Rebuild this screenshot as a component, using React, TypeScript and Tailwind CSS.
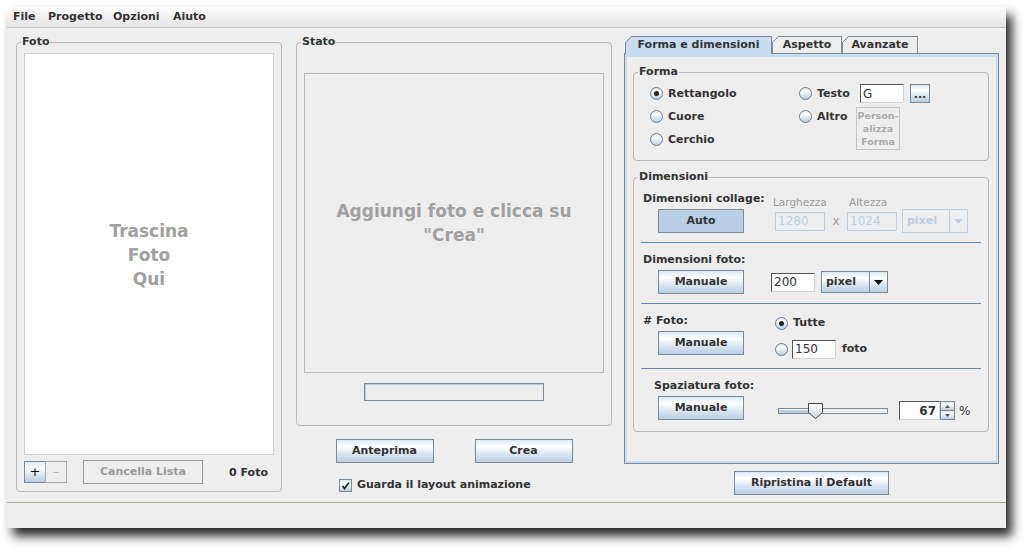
import React from 'react';

// Ocean (Metal) look: gradient used by buttons, radios, combos
const OCEAN = 'bg-[linear-gradient(#dde8f3,#ffffff_30%,#dde8f3_60%,#b8cfe5)]';

function Legend({title}: {title: string}) {
    return (
        <span className="absolute -top-[8px] left-[4px] bg-[#eeeeee] px-[1px] leading-[14px]">
            {title}
        </span>
    );
}

function Button({label, className = ''}: {label: string; className?: string}) {
    return (
        <div className={`flex h-[24px] items-center justify-center border border-[#7a8a99] pt-px ${OCEAN} ${className}`}>
            {label}
        </div>
    );
}

function Radio({checked}: {checked?: boolean}) {
    return (
        <span className={`flex h-[13px] w-[13px] shrink-0 items-center justify-center rounded-full border border-[#6f7f8f] ${OCEAN}`}>
            {checked && <span className="h-[5px] w-[5px] rounded-full bg-[#222]"/>}
        </span>
    );
}

function Field({value, className = '', disabled}: {value: string; className?: string; disabled?: boolean}) {
    const look = disabled
        ? 'border-[#b8cfe5] bg-[#eeeeee] text-[#b8cfe5]'
        : 'border-t-[#555] border-l-[#555] border-r-[#d4d4d4] border-b-[#d4d4d4] bg-white text-[#333]';
    return (
        <div className={`flex h-[19px] items-center border pl-[2px] text-[12px] font-normal ${look} ${className}`}>
            {value}
        </div>
    );
}

function Arrow({color}: {color: string}) {
    return (
        <svg width="9" height="5" viewBox="0 0 9 5">
            <polygon points="0,0 9,0 4.5,5" fill={color}/>
        </svg>
    );
}

function Combo({className = '', disabled}: {className?: string; disabled?: boolean}) {
    return (
        <div className={`flex border ${disabled ? 'border-[#b8cfe5] text-[#b8cfe5]' : `border-[#7a8a99] ${OCEAN}`} ${className}`}>
            <div className="flex flex-1 items-center pl-[4px] pt-px">pixel</div>
            <div className={`flex w-[18px] items-center justify-center border-l ${disabled ? 'border-[#b8cfe5]' : 'border-[#7a8a99]'}`}>
                <Arrow color={disabled ? '#b8cfe5' : '#111'}/>
            </div>
        </div>
    );
}

function Tab({label, className, selected}: {label: string; className: string; selected?: boolean}) {
    return (
        <div
            className={`relative flex items-center justify-center border-t border-l border-r border-[#7a8a99] ${selected ? 'z-10 h-[18px] bg-[#c8ddf2] pb-px' : 'h-[17px] bg-[#eeeeee]'} ${className}`}>
            <svg className="absolute -left-px -top-px" width="7" height="7" viewBox="0 0 7 7">
                <polygon points="0,0 6.5,0 0,6.5" fill="#eeeeee"/>
                <line x1="0.5" y1="6.5" x2="6.5" y2="0.5" stroke="#7a8a99"/>
            </svg>
            {label}
        </div>
    );
}

function Slider() {
    return (
        <svg width="110" height="16" viewBox="0 0 110 16">
            <defs>
                <linearGradient id="thumb" x1="0" y1="0" x2="0" y2="1">
                    <stop offset="0" stopColor="#ffffff"/>
                    <stop offset="1" stopColor="#c9d9ec"/>
                </linearGradient>
            </defs>
            <rect x="0.5" y="5.5" width="109" height="5" fill="#eeeeee" stroke="#7a8a99"/>
            <rect x="1" y="6" width="36" height="4" fill="#b8cfe5"/>
            <line x1="1" y1="6.5" x2="37" y2="6.5" stroke="#ffffff"/>
            <path d="M30.5 0.5 H44.5 V9.5 L37.5 15.5 L30.5 9.5 Z" fill="url(#thumb)" stroke="#444"/>
        </svg>
    );
}

function Spinner() {
    return (
        <div className="ml-[11px] flex h-[19px]">
            <div className="flex w-[41px] items-center justify-end border border-t-[#555] border-l-[#555] border-r-[#d4d4d4] border-b-[#d4d4d4] bg-white pr-[3px] text-[12px]">
                67
            </div>
            <div className="flex w-[15px] flex-col border border-[#7a8a99]">
                <div className={`flex flex-1 items-center justify-center border-b border-[#7a8a99] ${OCEAN}`}>
                    <svg width="5" height="3" viewBox="0 0 5 3"><polygon points="2.5,0 5,3 0,3" fill="#555"/></svg>
                </div>
                <div className={`flex flex-1 items-center justify-center ${OCEAN}`}>
                    <svg width="5" height="3" viewBox="0 0 5 3"><polygon points="0,0 5,0 2.5,3" fill="#555"/></svg>
                </div>
            </div>
        </div>
    );
}

function Separator() {
    return <div className="mx-[7px] h-px bg-[#6382bf]"/>;
}

export default function App() {
    return (
        <div className="h-[551px] w-[1029px] overflow-hidden bg-white pl-[7px] pt-[7px] font-['DejaVu_Sans',sans-serif] text-[11px] font-bold text-[#333]">
            <div className="flex h-[521px] w-[999px] flex-col bg-[#eeeeee] shadow-[6px_8px_10px_rgba(0,0,0,0.85)]">
                {/* menu bar */}
                <div className="flex h-[20px] items-center bg-linear-to-b from-[#fdfdfd] to-[#e4e4e4] pl-[6px] pt-px">
                    <span className="w-[35px]">File</span>
                    <span className="w-[65px]">Progetto</span>
                    <span className="w-[60px]">Opzioni</span>
                    <span>Aiuto</span>
                </div>
                <div className="h-px bg-[#c4c4c4]"/>

                <div className="flex h-[474px] items-start pl-[9px]">
                    {/* Foto */}
                    <div className="relative mt-[14px] flex h-[450px] w-[266px] flex-col rounded-[4px] border border-[#b8b8b8] px-[7px] pb-[7px] pt-[10px]">
                        <Legend title="Foto"/>
                        <div className="flex h-[402px] items-center justify-center border border-[#cfcfcf] bg-white">
                            <div className="pt-px text-center text-[17px] leading-[24px] text-[#a0a0a0]">
                                Trascina<br/>Foto<br/>Qui
                            </div>
                        </div>
                        <div className="mt-[5px] flex h-[24px] items-center">
                            <div className={`flex h-[22px] w-[22px] items-center justify-center border border-[#7a8a99] text-[13px] font-normal text-[#111] ${OCEAN}`}>+</div>
                            <div className="-ml-px flex h-[22px] w-[22px] items-center justify-center border border-[#a8a8a8] font-normal text-[#aaa]">–</div>
                            <div className="ml-[16px] flex h-[24px] w-[120px] items-center justify-center border border-[#9a9a9a] pt-px text-[#9a9a9a]">
                                Cancella Lista
                            </div>
                            <span className="ml-auto mr-[6px] pt-[2px]">0 Foto</span>
                        </div>
                    </div>

                    {/* Stato */}
                    <div className="ml-[14px] flex w-[316px] flex-col">
                        <div className="relative mt-[14px] h-[384px] rounded-[4px] border border-[#b8b8b8] px-[7px] pt-[30px]">
                            <Legend title="Stato"/>
                            <div className="flex h-[300px] items-center justify-center border border-[#b8b8b8] text-center text-[17px] leading-[24px] text-[#a0a0a0]">
                                Aggiungi foto e clicca su<br/>"Crea"
                            </div>
                            <div className="mx-auto mt-[10px] h-[18px] w-[180px] border border-[#7a8a99] shadow-[inset_1px_1px_0_#b8cfe5]"/>
                        </div>
                        <div className="mt-[13px] flex justify-center gap-[41px]">
                            <Button label="Anteprima" className="w-[98px]"/>
                            <Button label="Crea" className="w-[98px]"/>
                        </div>
                        <div className="ml-[43px] mt-[14px] flex items-center gap-[5px]">
                            <span className={`flex h-[13px] w-[13px] items-center justify-center border border-[#7a8a99] ${OCEAN}`}>
                                <svg width="11" height="11" viewBox="0 0 11 11">
                                    <path d="M2.5 6 L4.5 8.5 L9 2.5" stroke="#222" strokeWidth="1.7" fill="none"/>
                                </svg>
                            </span>
                            <span>Guarda il layout animazione</span>
                        </div>
                    </div>

                    {/* impostazioni */}
                    <div className="ml-[12px] flex w-[375px] flex-col">
                        <div className="mt-[8px] flex h-[17px] items-start pl-px">
                            <Tab label="Forma e dimensioni" className="w-[147px]" selected/>
                            <Tab label="Aspetto" className="w-[70px]"/>
                            <Tab label="Avanzate" className="w-[76px]"/>
                        </div>
                        <div className="h-[411px] border border-[#7a8a99]">
                            <div className="h-full border-2 border-t-[3px] border-[#c8ddf2] pl-[6px] pr-[7px] pt-[15px]">
                                {/* Forma */}
                                <div className="relative flex h-[89px] rounded-[4px] border border-[#b8b8b8] pl-[16px] pt-[9px]">
                                    <Legend title="Forma"/>
                                    <div className="flex w-[149px] flex-col">
                                        <div className="flex h-[23px] items-center gap-[5px]"><Radio checked/><span className="pt-px">Rettangolo</span></div>
                                        <div className="flex h-[23px] items-center gap-[5px]"><Radio/><span className="pt-px">Cuore</span></div>
                                        <div className="flex h-[23px] items-center gap-[5px]"><Radio/><span className="pt-px">Cerchio</span></div>
                                    </div>
                                    <div className="flex flex-col">
                                        <div className="flex h-[23px] items-center">
                                            <Radio/>
                                            <span className="ml-[5px] w-[43px] pt-px">Testo</span>
                                            <Field value="G" className="w-[44px]"/>
                                            <div className={`ml-[6px] flex h-[19px] w-[20px] items-end justify-center border border-[#7a8a99] pb-[3px] leading-[8px] ${OCEAN}`}>...</div>
                                        </div>
                                        <div className="flex items-start">
                                            <div className="flex h-[23px] items-center">
                                                <Radio/>
                                                <span className="ml-[5px] w-[39px] pt-px">Altro</span>
                                            </div>
                                            <div className="mt-[2px] flex h-[43px] w-[44px] items-center justify-center border border-[#c4c4c4] text-center text-[9.5px] leading-[13px] text-[#aaa]">
                                                Person-<br/>alizza<br/>Forma
                                            </div>
                                        </div>
                                    </div>
                                </div>

                                {/* Dimensioni */}
                                <div className="relative mt-[16px] flex h-[255px] flex-col rounded-[4px] border border-[#b8b8b8]">
                                    <Legend title="Dimensioni"/>
                                    <div className="flex h-[64px] pl-[9px]">
                                        <div className="flex w-[130px] flex-col pt-[14px]">
                                            <span className="h-[14px] whitespace-nowrap leading-[14px]">Dimensioni collage:</span>
                                            <div className="ml-[15px] mt-[3px] flex h-[24px] w-[86px] items-center justify-center border border-[#7a8a99] bg-[#b8cfe5] pt-px">
                                                Auto
                                            </div>
                                        </div>
                                        <div className="flex flex-col pt-[18px]">
                                            <div className="flex h-[12px] text-[10.5px] font-normal leading-[12px] text-[#9a9a9a]">
                                                <span className="w-[76px]">Larghezza</span>
                                                <span>Altezza</span>
                                            </div>
                                            <div className="mt-[1px] flex h-[24px] items-center">
                                                <Field value="1280" className="ml-[2px] w-[50px]" disabled/>
                                                <span className="w-[22px] text-center text-[12px] font-normal text-[#9a9a9a]">x</span>
                                                <Field value="1024" className="w-[50px]" disabled/>
                                                <Combo className="ml-[5px] h-[24px] w-[66px]" disabled/>
                                            </div>
                                        </div>
                                    </div>
                                    <Separator/>
                                    <div className="flex h-[60px] flex-col pl-[9px] pt-[10px]">
                                        <span className="h-[14px] leading-[14px]">Dimensioni foto:</span>
                                        <div className="mt-[3px] flex h-[24px] items-center">
                                            <Button label="Manuale" className="ml-[15px] w-[86px]"/>
                                            <Field value="200" className="ml-[27px] w-[44px]"/>
                                            <Combo className="ml-[6px] h-[22px] w-[67px]"/>
                                        </div>
                                    </div>
                                    <Separator/>
                                    <div className="flex h-[64px] pl-[9px]">
                                        <div className="flex w-[132px] flex-col pt-[10px]">
                                            <span className="h-[14px] leading-[14px]"># Foto:</span>
                                            <Button label="Manuale" className="ml-[15px] mt-[3px] w-[86px]"/>
                                        </div>
                                        <div className="flex flex-col pt-[9px]">
                                            <div className="flex h-[20px] items-center gap-[5px]"><Radio checked/><span className="pt-px">Tutte</span></div>
                                            <div className="mt-[6px] flex h-[20px] items-center">
                                                <Radio/>
                                                <Field value="150" className="ml-[4px] w-[44px]"/>
                                                <span className="ml-[6px] pt-px">foto</span>
                                            </div>
                                        </div>
                                    </div>
                                    <Separator/>
                                    <div className="flex h-[62px] flex-col pt-[10px]">
                                        <span className="h-[14px] pl-[20px] leading-[14px]">Spaziatura foto:</span>
                                        <div className="mt-[3px] flex h-[24px] items-center pl-[24px]">
                                            <Button label="Manuale" className="w-[86px]"/>
                                            <div className="ml-[34px] mt-[5px] flex items-center">
                                                <Slider/>
                                                <Spinner/>
                                                <span className="ml-[4px] text-[12px] font-normal">%</span>
                                            </div>
                                        </div>
                                    </div>
                                </div>
                            </div>
                        </div>
                        <Button label="Ripristina il Default" className="mt-[7px] w-[155px] self-center"/>
                    </div>
                </div>

                <div className="h-px bg-[#aca899]"/>
                <div className="h-[25px]"/>
            </div>
        </div>
    );
}
